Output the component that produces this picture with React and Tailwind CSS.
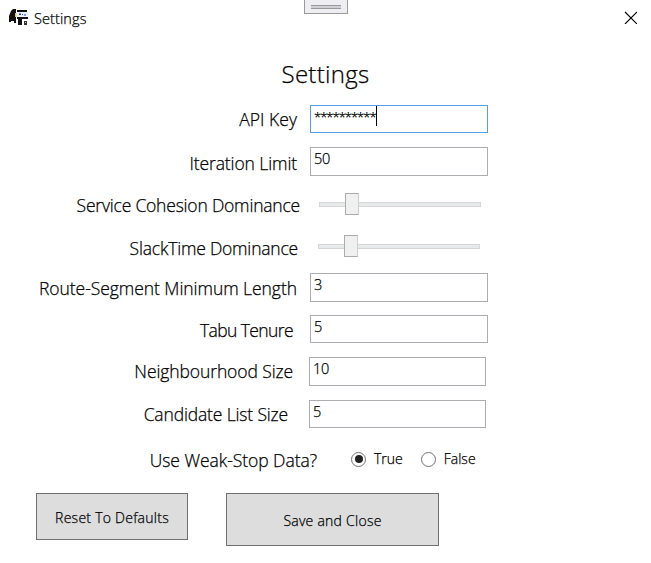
const rows = [
  { label: "API Key", labelClass: "w-[297px] tracking-[0.05px]", value: "**********", focused: true, box: "ml-[13px] w-[178px] h-7", rowClass: "h-[42px]" },
  { label: "Iteration Limit", labelClass: "w-[297px] mt-0.5 tracking-[-0.1px]", value: "50", box: "ml-[13px] w-[178px] h-[29px]", rowClass: "h-[43px]" },
  { label: "Service Cohesion Dominance", labelClass: "w-[300px] mt-px tracking-[-0.2px]", slider: "ml-[19px]", rowClass: "h-[42px]", sliderTop: "mt-[3px]" },
  { label: "SlackTime Dominance", labelClass: "w-[298px] mt-0.5 tracking-[-0.2px]", slider: "ml-5", rowClass: "h-[41px]", sliderTop: "mt-[3px]" },
  { label: "Route-Segment Minimum Length", labelClass: "w-[297px] mt-px tracking-[-0.05px]", value: "3", box: "ml-[13px] w-[178px] h-[29px]", rowClass: "h-[42px]" },
  { label: "Tabu Tenure", labelClass: "w-[293px] mt-px tracking-[-0.6px]", value: "5", box: "ml-[17px] w-[178px] h-7", rowClass: "h-[42px]" },
  { label: "Neighbourhood Size", labelClass: "w-[293px] tracking-[-0.1px]", value: "10", box: "ml-4 w-[177px] h-[29px]", rowClass: "h-[43px]" },
  { label: "Candidate List Size", labelClass: "w-[288px] tracking-[-0.15px]", value: "5", box: "ml-[21px] w-[177px] h-7", rowClass: "h-[46px]" },
];

function AppIcon() {
  return (
    <svg width="21" height="20" viewBox="0 0 21 20" className="shrink-0">
      <path d="M1 15V9L3 4L5 2H8V16H6V14H3V15H1Z" fill="#111" />
      <path d="M9 3H19V5H9ZM9 10H20V12H14V18H10V12H9Z" fill="#111" />
      <path d="M7 6H8.5V10H7Z" fill="#f0c020" />
      <path d="M9 5H20V9.5H9Z" fill="#e8eefb" />
      <path d="M11 6.5H13V8H11ZM14 7H15V8H14ZM16 7.5H18V8.5H16Z" fill="#234a91" />
      <path d="M16 14H19V18H16Z" fill="#333" />
      <path d="M17 15H18V16H17Z" fill="#ccc" />
    </svg>
  );
}

function Slider() {
  return (
    <div className="flex h-[22px] w-[162px] items-center">
      <div className="h-[5px] w-[26px] border border-r-0 border-[#d6d6d6] bg-[#e7eaea]" />
      <div className="h-[22px] w-[14px] border border-[#acacac] border-r-[#cfcfcf] bg-[#f0f0f0]" />
      <div className="h-[5px] flex-1 border border-l-0 border-[#d6d6d6] bg-[#e7eaea]" />
    </div>
  );
}

function Radio({ checked, label }) {
  return (
    <div className="flex items-center gap-2">
      <span className="flex size-[15px] items-center justify-center rounded-full border border-[#707070] bg-white">
        {checked && <span className="size-2 rounded-full bg-[#212121]" />}
      </span>
      <span className="text-sm leading-5">{label}</span>
    </div>
  );
}

export default function App() {
  return (
    <div className="h-[563px] w-[651px] overflow-hidden bg-white font-['Open_Sans','Noto_Sans',sans-serif] font-light text-black [-webkit-text-stroke:0.25px_#000]">
      <header className="flex h-9 items-start">
        <div className="flex w-[304px] pl-2 pt-[7px]">
          <AppIcon />
          <span className="ml-[5px] mt-0.5 text-[14.5px] leading-5 tracking-[0.1px]">Settings</span>
        </div>
        <div className="flex h-[14px] w-11 justify-center border border-t-0 border-[#999] bg-[#eeeef2] pt-[5px]">
          <div className="h-1 w-[30px] border-y border-[#999] bg-[#d0d0d4]" />
        </div>
        <svg width="13" height="13" viewBox="0 0 13 13" className="ml-[276px] mt-[11px]">
          <path d="M1 1L13 13M13 1L1 13" stroke="#000" strokeWidth="1.1" />
        </svg>
      </header>

      <h1 className="h-[69px] w-[651px] pt-[22px] text-center text-2xl font-light leading-8 tracking-[0.3px]">Settings</h1>

      {rows.map((r) => (
        <div key={r.label} className={`flex items-start ${r.rowClass}`}>
          <div className={`shrink-0 whitespace-nowrap text-right text-[17.5px] leading-7 ${r.labelClass}`}>{r.label}</div>
          {r.slider ? (
            <div className={`${r.slider} ${r.sliderTop}`}>
              <Slider />
            </div>
          ) : (
            <div className={`flex items-start border pl-[3px] ${r.focused ? "border-[#569de5]" : "border-[#abadb3]"} ${r.box}`}>
              <span className={`mt-px leading-5 ${r.focused ? "text-[13px] tracking-[-1px]" : "text-[14.5px] tracking-[-0.3px]"}`}>{r.value}</span>
              {r.focused && <span className="h-5 w-px bg-black" />}
            </div>
          )}
        </div>
      ))}

      <div className="flex h-[47px] items-start">
        <div className="w-[317px] whitespace-nowrap text-right text-[17.5px] leading-7 tracking-[-0.05px]">Use Weak-Stop Data?</div>
        <div className="ml-[34px] mt-[3px] flex gap-[18px]">
          <Radio checked label="True" />
          <Radio label="False" />
        </div>
      </div>

      <div className="flex items-start pl-9 text-sm tracking-[0.25px]">
        <button className="h-[47px] w-[152px] border border-[#707070] bg-[#ddd] pt-0.5">Reset To Defaults</button>
        <button className="ml-[38px] h-[53px] w-[213px] border border-[#707070] bg-[#ddd] pt-0.5">Save and Close</button>
      </div>
    </div>
  );
}
